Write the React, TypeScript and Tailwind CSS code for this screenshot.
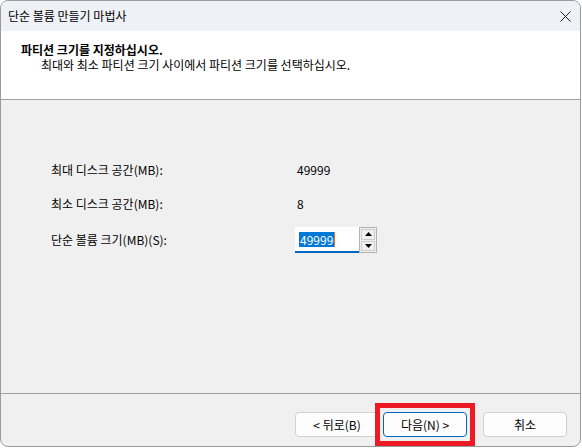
function SpinButton({ up }: { up?: boolean }) {
  return (
    <div className="flex-1 flex items-center justify-center bg-[#f0f0f0] border border-[#cccccc]">
      <svg width="7" height="4" viewBox="0 0 7 4">
        {up ? <polygon points="0,4 7,4 3.5,0" fill="#000" /> : <polygon points="0,0 7,0 3.5,4" fill="#000" />}
      </svg>
    </div>
  );
}

function WizardButton({ label, focused }: { label: string; focused?: boolean }) {
  return (
    <button
      className={
        "w-[84px] h-[25px] rounded-[4px] bg-[#fdfdfd] text-[12px] leading-none border " +
        (focused ? "border-[#0067c0]" : "border-[#d0d0d0]")
      }
    >
      {label}
    </button>
  );
}

export default function App() {
  return (
    <div className="relative w-[582px] h-[448px] bg-white text-[12px] text-black font-['Noto_Sans_CJK_KR','Noto_Sans',sans-serif]">
      <div className="w-[581px] h-[447px] rounded-[8px] border border-[#9a9a9a] overflow-hidden flex flex-col bg-[#f0f0f0]">
        {/* title bar */}
        <div className="h-[30px] shrink-0 bg-[#eef2f7] flex items-center justify-between pl-[7px] pr-[8px]">
          <span className="leading-[14px]">단순 볼륨 만들기 마법사</span>
          <svg width="11" height="11" viewBox="0 0 11 11" className="mr-[1px]">
            <path d="M0.5 0.5 L10.5 10.5 M10.5 0.5 L0.5 10.5" stroke="#1a1a1a" strokeWidth="1" />
          </svg>
        </div>

        {/* header */}
        <div className="h-[69px] shrink-0 bg-white border-b border-[#a0a0a0] pl-[20px] pt-[11px]">
          <div className="font-bold leading-[15px]">파티션 크기를 지정하십시오.</div>
          <div className="pl-[20px] leading-[15px]">최대와 최소 파티션 크기 사이에서 파티션 크기를 선택하십시오.</div>
        </div>

        {/* body */}
        <div className="flex-1 border-b border-[#a0a0a0] pl-[50px] pt-[60px]">
          <div className="flex items-center h-[20px]">
            <span className="w-[246px]">최대 디스크 공간(MB):</span>
            <span>49999</span>
          </div>
          <div className="flex items-center h-[20px] mt-[14px]">
            <span className="w-[246px]">최소 디스크 공간(MB):</span>
            <span>8</span>
          </div>
          <div className="flex items-center h-[26px] mt-[13px]">
            <span className="w-[244px]">단순 볼륨 크기(MB)(S):</span>
            <div className="w-[64px] h-[26px] bg-white border-b-2 border-[#0067c0] flex items-center pl-[4px]">
              <span className="bg-[#0078d7] text-white leading-[15px] h-[15px] px-[1px]">49999</span>
              <span className="w-[1px] h-[15px] bg-[#e0701a]" />
            </div>
            <div className="w-[18px] h-[26px] border border-[#b4b4b4] bg-[#f0f0f0] flex flex-col p-[1px] gap-[1px]">
              <SpinButton up />
              <SpinButton />
            </div>
          </div>
        </div>

        {/* footer */}
        <div className="h-[52px] shrink-0 flex items-start justify-end pt-[18px] pr-[13px]">
          <div className="flex gap-[4px]">
            <WizardButton label="< 뒤로(B)" />
            <WizardButton label="다음(N) >" focused />
          </div>
          <div className="ml-[16px]">
            <WizardButton label="취소" />
          </div>
        </div>
      </div>

      {/* red highlight annotation */}
      <div className="absolute left-[375px] top-[403px] w-[100px] h-[43px] border-[5px] border-[#ed1c24]" />
    </div>
  );
}
